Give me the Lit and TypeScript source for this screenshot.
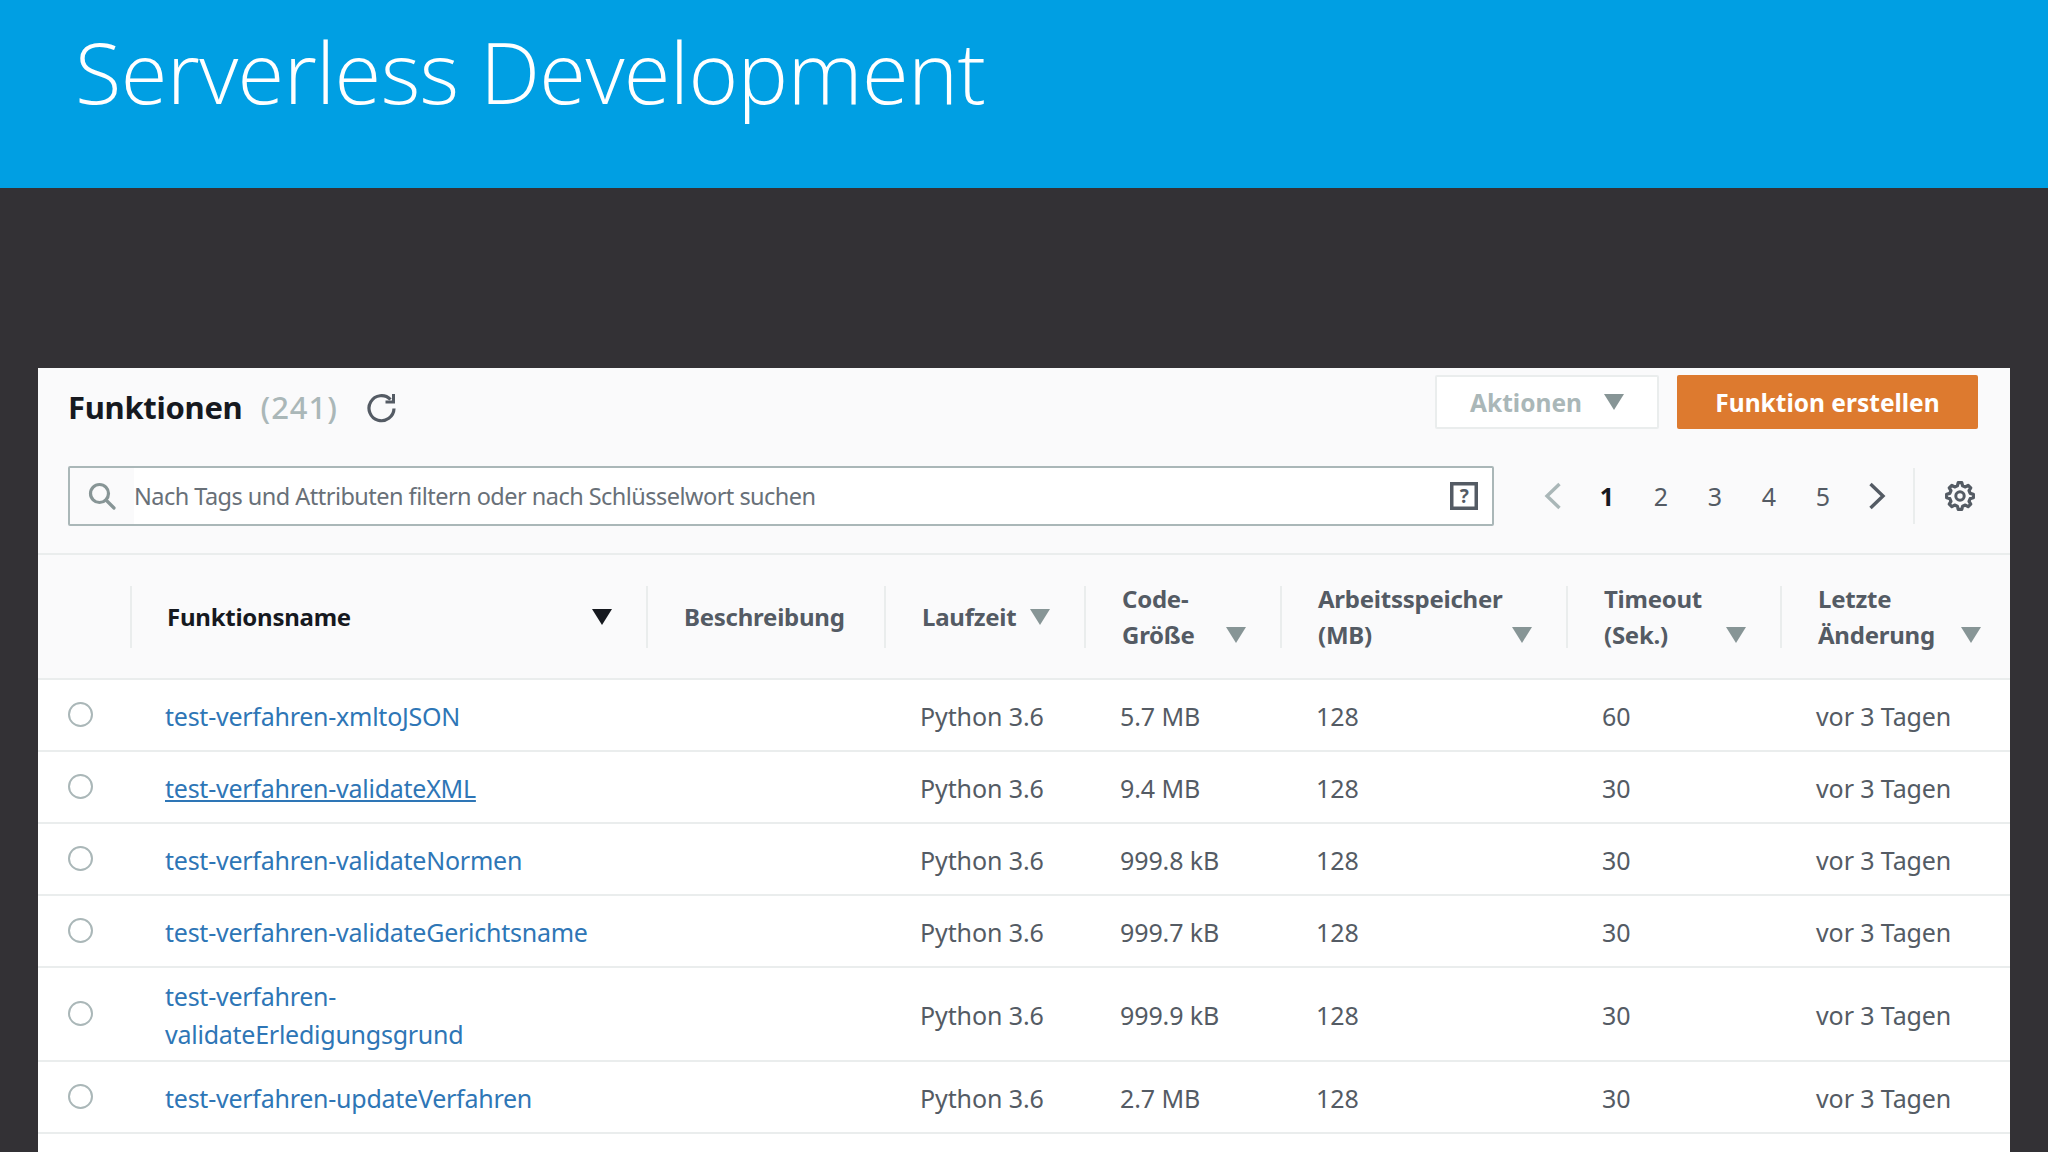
import { LitElement, html, css } from "lit";
import { customElement } from "lit/decorators.js";

const rows = [
  ["test-verfahren-xmltoJSON", "5.7 MB", "60"],
  ["test-verfahren-validateXML", "9.4 MB", "30"],
  ["test-verfahren-validateNormen", "999.8 kB", "30"],
  ["test-verfahren-validateGerichtsname", "999.7 kB", "30"],
  ["test-verfahren-\nvalidateErledigungsgrund", "999.9 kB", "30"],
  ["test-verfahren-updateVerfahren", "2.7 MB", "30"],
];

const caret = (dark = false) => html`<svg class="caret" viewBox="0 0 20 16" width="20" height="16"><path d="M0 0h20L10 16z" fill=${dark ? "#16191f" : "#879596"}></path></svg>`;

function gearPath(cx: number, cy: number, outer: number, inner: number, teeth: number) {
  const pts: string[] = [];
  const step = (Math.PI * 2) / teeth;
  for (let i = 0; i < teeth; i++) {
    const a = i * step - Math.PI / 2;
    const seq: [number, number][] = [
      [a - step * 0.32, inner],
      [a - step * 0.17, outer],
      [a + step * 0.17, outer],
      [a + step * 0.32, inner],
    ];
    for (const [t, r] of seq) pts.push(`${(cx + r * Math.cos(t)).toFixed(2)} ${(cy + r * Math.sin(t)).toFixed(2)}`);
  }
  return "M" + pts.join("L") + "Z";
}

@customElement("app-root")
export class AppRoot extends LitElement {
  static styles = css`
    :host { display: block; width: 2048px; height: 1152px; overflow: hidden; background: #333135; font-family: "Noto Sans", sans-serif; color: #545b64; }
    .banner { height: 188px; background: #009fe3; color: #fff; font-family: "Open Sans", sans-serif; font-weight: 300; font-size: 85px; line-height: 142px; padding-left: 75px; letter-spacing: -0.65px; box-sizing: border-box; }
    .card { margin: 180px 38px 0; background: #fafafb; height: 784px; overflow: hidden; }
    .top { height: 187px; box-sizing: border-box; padding: 7px 32px 0 30px; border-bottom: 2px solid #eaeded; display: grid; grid-template-columns: 1fr auto; grid-template-rows: 54px 60px; row-gap: 37px; }
    .title { display: flex; align-items: center; padding-top: 10px; }
    h1 { margin: 0; font-size: 31px; line-height: 40px; font-weight: 700; color: #16191f; letter-spacing: -0.3px; }
    .count { font-size: 31px; font-weight: 500; color: #aab7b8; letter-spacing: 1px; margin-left: 18px; }
    .refresh { margin-left: 28px; margin-top: 2px; }
    .btns { display: flex; gap: 18px; }
    button { font: 700 24.5px "Noto Sans", sans-serif; border-radius: 2px; height: 54px; box-sizing: border-box; display: flex; align-items: center; justify-content: center; padding: 0; }
    .act { width: 224px; background: #fff; border: 2px solid #eaeded; color: #aab7b8; gap: 22px; }
    .new { width: 301px; background: #dd7a2f; border: none; color: #fff; }
    .toolbar { grid-column: 1 / 3; display: flex; align-items: center; }
    .search { flex: none; width: 1426px; height: 60px; box-sizing: border-box; border: 2px solid #aab7b8; border-radius: 2px; background: #fff; display: flex; align-items: center; font-size: 23.5px; letter-spacing: -0.53px; color: #687078; }
    .lens { width: 64px; display: flex; justify-content: center; flex: none; height: 100%; align-items: center; background: #fafafb; }
    .ph { flex: 1; }
    .help { margin-right: 14px; display: flex; }
    .pager { display: flex; align-items: center; margin-left: 48px; font-size: 25px; }
    .pager span { text-align: center; }
    .nums span { width: 54px; }
    .pager .on { font-weight: 700; color: #16191f; }
    .arrow { display: flex; width: 22px; justify-content: center; flex: none; }
    .nums { display: flex; margin: 0 16px; }
    .gear { margin-left: 25px; padding-left: 29px; border-left: 2px solid #eaeded; height: 56px; display: flex; align-items: center; }
    .row { display: grid; grid-template-columns: 92px 516px 238px 200px 196px 286px 214px 1fr; border-bottom: 2px solid #eaeded; }
    .head { height: 125px; box-sizing: border-box; background: #fafafb; align-items: center; }
    .hc { height: 62px; border-left: 2px solid #eaeded; box-sizing: border-box; padding: 0 34px 0 36px; display: flex; justify-content: space-between; align-items: center; font-size: 24px; letter-spacing: -0.25px; line-height: 36px; font-weight: 700; color: #545b64; }
    .hc.strong { color: #16191f; padding-left: 35px; }
    .hc.two .caret { margin-top: 36px; }
    .hc .caret { flex: none; }
    .hc.last { padding-right: 29px; }
    .body { background: #fff; align-items: center; height: 72px; padding-top: 1px; box-sizing: border-box; font-size: 25px; letter-spacing: -0.1px; line-height: 38px; color: #545b64; }
    .body.tall { height: 94px; }
    .radio { width: 25px; height: 25px; box-sizing: border-box; border: 2px solid #aab7b8; border-radius: 50%; background: #fff; margin: -2px 0 0 30px; }
    .c { padding-left: 36px; }
    .name { color: #2e76b6; white-space: pre-line; padding-left: 35px; letter-spacing: -0.25px; }
    .u { text-decoration: underline; }
    .tail { background: #fff; height: 20px; }
  `;

  render() {
    return html`
      <div class="banner">Serverless Development</div>
      <section class="card">
        <div class="top">
          <div class="title">
            <h1>Funktionen</h1><span class="count">(241)</span>
            <svg class="refresh" width="30" height="30" viewBox="0 0 30 30" fill="none" stroke="#545b64" stroke-width="3.2"><path d="M24.500 6.500a12.500 12.500 0 1 0 3.500 9"></path><path d="M27.500 1v8h-8" stroke-width="3"></path></svg>
          </div>
          <div class="btns">
            <button class="act">Aktionen ${caret()}</button>
            <button class="new">Funktion erstellen</button>
          </div>
          <div class="toolbar">
            <div class="search">
              <span class="lens"><svg width="30" height="30" viewBox="0 0 30 30" fill="none" stroke="#879596" stroke-width="3.200"><circle cx="12.500" cy="12.500" r="9"></circle><path d="M19 19l8 8" stroke-linecap="round"></path></svg></span>
              <span class="ph">Nach Tags und Attributen filtern oder nach Schlüsselwort suchen</span>
              <span class="help"><svg width="28" height="28" viewBox="0 0 28 28"><rect x="1.750" y="1.750" width="24.500" height="24.500" fill="none" stroke="#545b64" stroke-width="3.500"></rect><text x="14" y="21" text-anchor="middle" font-size="19" font-weight="700" font-family="Noto Sans" fill="#545b64">?</text></svg></span>
            </div>
            <div class="pager">
              <span class="arrow"><svg width="18" height="28" viewBox="0 0 18 28" fill="none" stroke="#aab7b8" stroke-width="3.400"><path d="M15.500 2L3 14l12.500 12"></path></svg></span>
              <div class="nums"><span class="on">1</span><span>2</span><span>3</span><span>4</span><span>5</span></div>
              <span class="arrow"><svg width="18" height="28" viewBox="0 0 18 28" fill="none" stroke="#545b64" stroke-width="3.400"><path d="M2.500 2L15 14 2.500 26"></path></svg></span>
              <div class="gear">
                <svg width="32" height="32" viewBox="0 0 32 32" fill="none" stroke="#545b64" stroke-width="3.200" stroke-linejoin="round"><path d=${gearPath(16, 16, 13.5, 10.5, 8)}></path><circle cx="16" cy="16" r="4.200" stroke-width="3"></circle></svg>
              </div>
            </div>
          </div>
        </div>
        <div class="row head">
          <div></div>
          <div class="hc strong"><span>Funktionsname</span>${caret(true)}</div>
          <div class="hc"><span>Beschreibung</span></div>
          <div class="hc"><span>Laufzeit</span>${caret()}</div>
          <div class="hc two"><span>Code-<br>Größe</span>${caret()}</div>
          <div class="hc two"><span>Arbeitsspeicher<br>(MB)</span>${caret()}</div>
          <div class="hc two"><span>Timeout<br>(Sek.)</span>${caret()}</div>
          <div class="hc two last"><span>Letzte<br>Änderung</span>${caret()}</div>
        </div>
        ${rows.map((r, i) => html`
          <div class="row body ${i === 4 ? "tall" : ""}">
            <div class="radio"></div>
            <div class="name"><span class=${i === 1 ? "u" : ""}>${r[0]}</span></div>
            <div></div>
            <div class="c">Python 3.6</div>
            <div class="c">${r[1]}</div>
            <div class="c">128</div>
            <div class="c">${r[2]}</div>
            <div class="c">vor 3 Tagen</div>
          </div>`)}
        <div class="tail"></div>
      </section>
    `;
  }
}
